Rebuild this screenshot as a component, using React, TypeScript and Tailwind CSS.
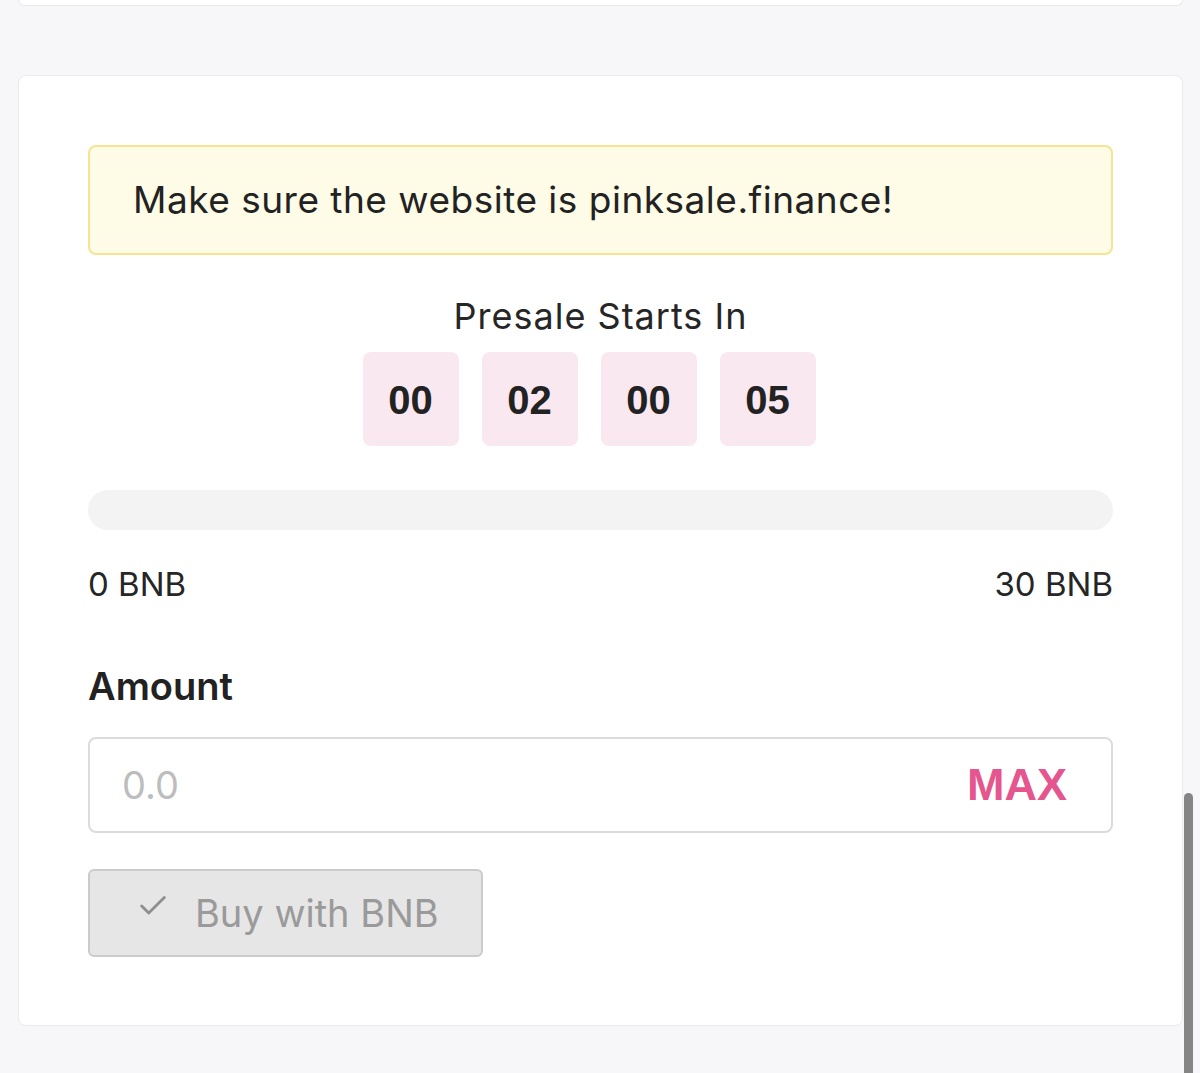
import { Check } from 'lucide-react'

const countdown = ['00', '02', '00', '05']

export default function App() {
  return (
    <div
      className="relative min-h-[1073px] bg-[#f7f7f9] pl-[18px] pr-[17px] overflow-hidden"
      style={{ fontFamily: 'Inter, "Open Sans", sans-serif' }}
    >
      {/* tail of the card above */}
      <div className="h-[6px] bg-white border-x border-b border-[#e9e9ec] rounded-b-lg" />

      <div className="mt-[69px] bg-white border border-[#ebebee] rounded-lg px-[69px] pt-[69px] pb-[68px]">
        <div className="h-[110px] flex items-center rounded-lg border-2 border-[#f6e393] bg-[#fefbe7] px-[43px]">
          <span className="text-[37px] text-[#222] tracking-[0.5px]">Make sure the website is pinksale.finance!</span>
        </div>

        <div className="mt-[39px] text-center text-[36px] leading-[44px] tracking-[1px] text-[#262626]">Presale Starts In</div>

        <div className="mt-[14px] flex justify-center gap-[23px] pr-[23px]">
          {countdown.map((v, i) => (
            <div
              key={i}
              className="w-[96px] h-[94px] rounded-lg bg-[#fae8f1] flex items-center justify-center pt-[1px] text-[40px] font-bold text-[#222]"
              style={{ fontFamily: '"Liberation Sans", Arial, sans-serif' }}
            >
              {v}
            </div>
          ))}
        </div>

        <div className="mt-[44px] h-[40px] rounded-full bg-[#f3f3f3]" />

        <div className="mt-[34px] flex justify-between text-[33px] leading-[40px] text-[#262626]">
          <span>0 BNB</span>
          <span>30 BNB</span>
        </div>

        <div className="mt-[60px] text-[38px] leading-[44px] font-semibold text-[#222]">Amount</div>

        <div className="mt-[29px] h-[96px] rounded-lg border-2 border-[#dcdcdc] flex items-center justify-between pl-[32px] pr-[44px]">
          <span className="text-[38px] text-[#bdbdbd]">0.0</span>
          <span
            className="text-[45px] font-bold text-[#e5558e]"
            style={{ fontFamily: '"Liberation Sans", Arial, sans-serif' }}
          >
            MAX
          </span>
        </div>

        <button className="mt-[36px] w-[395px] h-[88px] rounded-md border-2 border-[#cbcbcb] bg-[#e6e6e6] flex items-center pl-[46px] gap-[25px]">
          <Check size={34} strokeWidth={2} color="#8f8f8f" className="-mt-[14px]" />
          <span className="text-[38px] text-[#9a9a9a]">Buy with BNB</span>
        </button>
      </div>

      {/* overlay scrollbar */}
      <div className="absolute right-[7px] top-[793px] w-[9px] h-[300px] rounded-full bg-[#858585]" />
    </div>
  )
}
